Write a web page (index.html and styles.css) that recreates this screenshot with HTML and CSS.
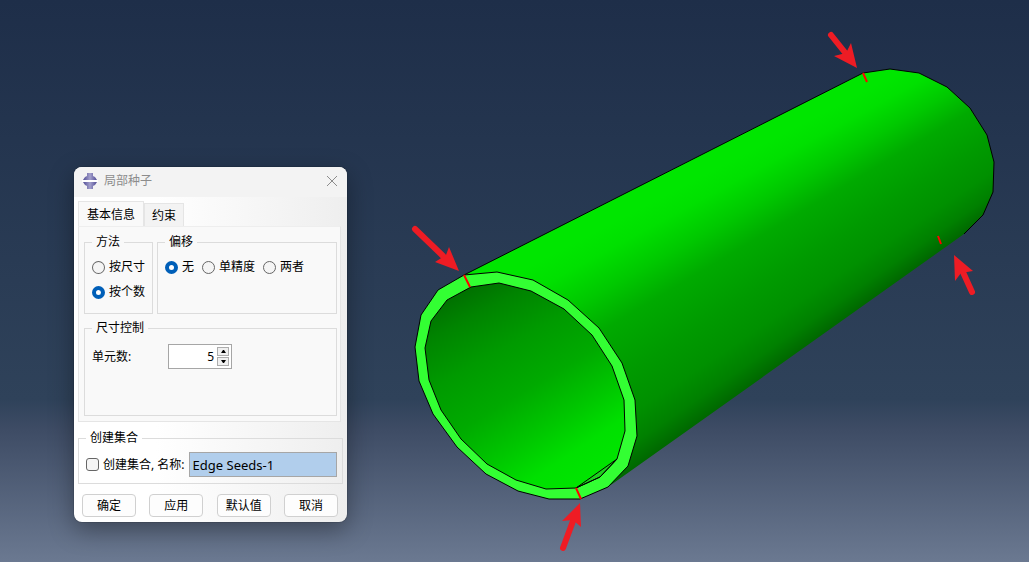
FILE: index.html
```html
<!DOCTYPE html>
<html lang="zh-CN">
<head>
    <meta charset="UTF-8">
    <meta name="viewport" content="width=device-width, initial-scale=1.0">
    <title>局部种子</title>
    <link rel="stylesheet" href="styles.css">
</head>
<body>
    <main class="viewport">
        <!-- Model canvas -->
        <svg class="model" viewBox="0 0 1029 562" preserveAspectRatio="xMinYMin meet" aria-hidden="true">
            <defs>
                <clipPath id="bodyClip">
                    <path d="M464 275L863 73L890 69L919 73L947 87L970 108L987 135L994 162L993 192L983 215L964 234L608 487L549 400Z"/>
                </clipPath>
                <clipPath id="boreClip">
                    <path d="M471 287L499 283L531 291L564 309L592 335L612 366L624 400L625 431L617 459L600 477L576 488L546 489L516 480L487 464L461 439L441 410L429 380L425 348L431 321L447 300Z"/>
                </clipPath>
            </defs>

            <foreignObject width="1029" height="562" clip-path="url(#bodyClip)">
                <div class="shade shade-body"></div>
            </foreignObject>
            <path class="edge" d="M464 275L863 73L890 69L919 73L947 87L970 108L987 135L994 162L993 192L983 215L964 234"/>

            <path class="ring" d="M464 275L497 272L533 280L568 300L599 328L622 363L635 400L637 436L628 466L608 487L580 499L549 499L518 491L486 474L457 447L433 414L419 381L415 347L421 315L438 290Z"/>
            <foreignObject width="1029" height="562" clip-path="url(#boreClip)">
                <div class="shade shade-bore"></div>
            </foreignObject>
            <path class="sliver" d="M576 488L617 459L600 477Z"/>
            <path class="edge" d="M471 287L499 283L531 291L564 309L592 335L612 366L624 400L625 431L617 459L600 477L576 488L546 489L516 480L487 464L461 439L441 410L429 380L425 348L431 321L447 300Z"/>

            <path class="seed" d="M464 275L470 287M576 488L581 499M863 73L867 82M938 236L941 244"/>

            <g class="arrow">
                <path class="shaft" d="M415 229L443 256M831 35L847 55M972 292L962 270M563 548L573 521"/>
                <path class="head" d="M459 271L449 247L446 255L435 262ZM857 68L851 43L846 53L834 56ZM954 255L955 281L961 273L973 271ZM580 503L562 521L573 520L581 527Z"/>
            </g>
        </svg>

        <!-- Local seeds dialog -->
        <form class="dialog" onsubmit="return false">
            <header class="titlebar">
                <svg class="logo" viewBox="0 0 16 16" aria-hidden="true">
                    <defs>
                        <linearGradient id="logoFill">
                            <stop offset="0" stop-color="#4f4a94"/>
                            <stop offset="0.5" stop-color="#a3a0cc"/>
                            <stop offset="1" stop-color="#4f4a94"/>
                        </linearGradient>
                    </defs>
                    <path d="M5 0h6v3l2 1 2 3H1l2-3 2-1zM1 9h14l-2 3-2 1v3H5v-3l-2-1z" fill="url(#logoFill)"/>
                    <path d="M0 7h16v2H0z" fill="#fff"/>
                </svg>
                <h1>局部种子</h1>
                <button type="button" class="close" aria-label="关闭">
                    <svg viewBox="0 0 12 12"><path d="M1 1l10 10M11 1L1 11"/></svg>
                </button>
            </header>

            <nav class="tabs">
                <button type="button" class="tab active">基本信息</button>
                <button type="button" class="tab">约束</button>
            </nav>

            <section class="panel">
                <div class="groups">
                    <fieldset class="group method">
                        <legend>方法</legend>
                        <label><input type="radio" name="method">按尺寸</label>
                        <label><input type="radio" name="method" checked>按个数</label>
                    </fieldset>
                    <fieldset class="group bias">
                        <legend>偏移</legend>
                        <label><input type="radio" name="bias" checked>无</label>
                        <label><input type="radio" name="bias">单精度</label>
                        <label><input type="radio" name="bias">两者</label>
                    </fieldset>
                </div>
                <fieldset class="group sizing">
                    <legend>尺寸控制</legend>
                    <label for="count">单元数:</label>
                    <div class="spinner">
                        <input type="text" id="count" value="5">
                        <div class="steps">
                            <button type="button" aria-label="增加"><svg viewBox="0 0 5 3"><path d="M0 3h5L3 0H2z"/></svg></button>
                            <button type="button" aria-label="减少"><svg viewBox="0 0 5 3"><path d="M0 0h5L3 3H2z"/></svg></button>
                        </div>
                    </div>
                </fieldset>
            </section>

            <fieldset class="group set">
                <legend>创建集合</legend>
                <input type="checkbox" id="createSet">
                <label for="createSet">创建集合, 名称:</label>
                <input type="text" class="set-name" value="Edge Seeds-1" aria-label="名称">
            </fieldset>

            <footer class="actions">
                <button type="submit">确定</button>
                <button type="button">应用</button>
                <button type="button">默认值</button>
                <button type="button">取消</button>
            </footer>
        </form>
    </main>
</body>
</html>
```
FILE: styles.css
```css
* {
    margin: 0;
    padding: 0;
    box-sizing: border-box;
}

body {
    font-family: 'Noto Sans', 'Noto Sans CJK SC', sans-serif;
    font-size: 12px;
    line-height: 16px;
    color: #000;
}

button,
input {
    font: inherit;
    color: inherit;
}

.viewport {
    position: relative;
    min-height: 100vh;
    overflow: hidden;
    background: linear-gradient(#1e2e49 0%, #2f425a 71%, #3d4b64 76%, #6b7991 100%);
}

/* Model */
.model {
    display: block;
    width: 100%;
}

.shade {
    width: 100%;
    height: 100%;
}

/* both surfaces fade around the vanishing point of the tube */
.shade-body {
    background: conic-gradient(at 1997px -501px, #006800 234.6deg, #008000 235.3deg, #009000 236.2deg, #009a00 237.5deg, #00aa00 239.2deg, #00c800 240.4deg, #00e000 241.6deg, #00e600 242.4deg);
}

.shade-bore {
    background: conic-gradient(at 1997px -501px, #00e600 235deg, #00e000 236.2deg, #00c800 237.3deg, #00aa00 238.8deg, #009a00 240.4deg, #008400 241.8deg, #006a00 243deg);
}

.edge {
    fill: none;
    stroke: #000;
}

.ring {
    fill: #33ff33;
    stroke: #000;
}

.sliver {
    fill: #1fd01f;
    stroke: #000;
}

.seed {
    fill: none;
    stroke: #f00;
    stroke-width: 2;
}

.shaft {
    fill: none;
    stroke: #ee1c24;
    stroke-width: 6;
    stroke-linecap: round;
}

.head {
    fill: #ee1c24;
}

/* Dialog */
.dialog {
    position: absolute;
    top: 167px;
    left: 74px;
    width: 273px;
    border-radius: 8px;
    background: linear-gradient(90deg, #fff 30%, #eee);
    box-shadow: 0 0 1px #000, 0 8px 24px rgba(0, 0, 0, 0.35);
    overflow: hidden;
}

.titlebar {
    display: flex;
    align-items: center;
    gap: 6px;
    height: 30px;
    padding: 0 8px 2px;
    background: #f3f3f3;
    color: #8c8c8c;
}

.titlebar h1 {
    flex: 1;
    font-size: 12px;
    font-weight: normal;
}

.logo {
    width: 16px;
    height: 16px;
}

.close {
    width: 14px;
    height: 14px;
    border: none;
    background: none;
}

.close svg {
    display: block;
    width: 12px;
    height: 12px;
    margin: 1px;
    fill: none;
    stroke: #8c8c8c;
}

.tabs {
    display: flex;
    align-items: flex-end;
    padding: 4px 4px 0;
}

.tab {
    height: 23px;
    padding: 2px 7px 0;
    border: 1px solid #e5e5e5;
    border-bottom: none;
    background: #f3f3f3;
}

.tab.active {
    height: 25px;
    padding: 2px 8px 0;
    background: #f9f9f9;
}

.panel {
    display: grid;
    gap: 6px;
    margin: 0 6px 0 4px;
    padding: 7px 3px 5px 5px;
    border: 1px solid #e5e5e5;
    border-top-color: #eee;
    background: #f9f9f9;
}

.groups {
    display: grid;
    grid-template-columns: 69px 1fr;
    gap: 4px;
}

.group {
    display: flex;
    min-width: 0;
    border: 1px solid #dcdcdc;
}

.group legend {
    padding: 0 4px;
}

.group label {
    display: flex;
    align-items: center;
    gap: 4px;
    white-space: nowrap;
}

.method,
.bias {
    height: 80px;
    padding: 9px 7px;
}

.method {
    flex-direction: column;
    gap: 9px;
}

.bias {
    align-items: flex-start;
    gap: 8px;
}

.sizing {
    align-items: flex-start;
    gap: 37px;
    height: 96px;
    padding: 8px 7px;
}

.sizing label {
    line-height: 25px;
}

input[type="radio"],
input[type="checkbox"] {
    appearance: none;
    width: 13px;
    height: 13px;
    border: 1px solid #666;
    background: #f5f5f5;
}

input[type="radio"] {
    border-radius: 50%;
}

input[type="radio"]:checked {
    border: 4px solid #005fb8;
    background: #fff;
}

input[type="checkbox"] {
    border-radius: 3px;
}

.spinner {
    display: flex;
    width: 64px;
    height: 25px;
    padding: 2px;
    border: 1px solid #a6a6a6;
    background: #fff;
}

.spinner input {
    width: 46px;
    padding-right: 3px;
    border: none;
    background: none;
    text-align: right;
}

.steps {
    display: grid;
    gap: 1px;
    width: 13px;
}

.steps button {
    display: flex;
    align-items: center;
    justify-content: center;
    border: 1px solid #adadad;
    background: #f0f0f0;
}

.steps svg {
    width: 5px;
    height: 3px;
}

.set {
    align-items: center;
    gap: 4px;
    margin: 8px 4px 0;
    padding: 6px 5px 6px 7px;
}

.set-name {
    flex: 1;
    min-width: 0;
    height: 25px;
    padding: 0 3px;
    border: 1px solid #a6a6a6;
    background: #b1ceec;
    font-size: 13px;
}

.actions {
    display: flex;
    justify-content: space-between;
    padding: 10px 9px 5px 8px;
}

.actions button {
    width: 54px;
    height: 23px;
    border: 1px solid #d0d0d0;
    border-radius: 4px;
    background: #fdfdfd;
}
```
